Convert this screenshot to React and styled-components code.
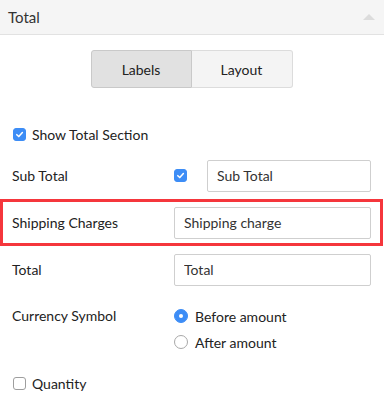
import React, { useState } from "react";
import styled, { createGlobalStyle } from "styled-components";

const GlobalStyle = createGlobalStyle`
  body {
    margin: 0;
    background: #fff;
    font-family: "Lato", "Liberation Sans", sans-serif;
    color: #222;
  }
`;

const App = () => {
  const [tab, setTab] = useState("labels");
  const [showTotal, setShowTotal] = useState(true);
  const [subTotal, setSubTotal] = useState(true);
  const [quantity, setQuantity] = useState(false);
  const [position, setPosition] = useState("before");

  return (
    <Panel>
      <GlobalStyle />
      <Header>
        <Title>Total</Title>
        <Caret />
      </Header>

      <Tabs>
        <Tab active={tab === "labels"} onClick={() => setTab("labels")}>
          Labels
        </Tab>
        <Tab active={tab === "layout"} onClick={() => setTab("layout")}>
          Layout
        </Tab>
      </Tabs>

      <Form>
        <CheckRow onClick={() => setShowTotal(!showTotal)}>
          <CheckBox checked={showTotal} />
          <span>Show Total Section</span>
        </CheckRow>

        <Row>
          <Label>Sub Total</Label>
          <Control>
            <CheckBox checked={subTotal} onClick={() => setSubTotal(!subTotal)} />
            <Input defaultValue="Sub Total" indent />
          </Control>
        </Row>

        <Row highlight>
          <Label>Shipping Charges</Label>
          <Control>
            <Input defaultValue="Shipping charge" />
          </Control>
        </Row>

        <Row>
          <Label>Total</Label>
          <Control>
            <Input defaultValue="Total" />
          </Control>
        </Row>

        <RadioRow>
          <Label>Currency Symbol</Label>
          <RadioList>
            <RadioItem onClick={() => setPosition("before")}>
              <Radio checked={position === "before"} />
              Before amount
            </RadioItem>
            <RadioItem onClick={() => setPosition("after")}>
              <Radio checked={position === "after"} />
              After amount
            </RadioItem>
          </RadioList>
        </RadioRow>

        <CheckRow onClick={() => setQuantity(!quantity)}>
          <CheckBox checked={quantity} />
          <span>Quantity</span>
        </CheckRow>
      </Form>
    </Panel>
  );
};

const CheckBox = ({ checked, onClick }) => (
  <Box checked={checked} onClick={onClick}>
    {checked && (
      <svg width="9" height="9" viewBox="0 0 10 10">
        <path
          d="M2 5.2 L4.2 7.3 L8.2 2.8"
          fill="none"
          stroke="#fff"
          strokeWidth="1.7"
          strokeLinecap="round"
          strokeLinejoin="round"
        />
      </svg>
    )}
  </Box>
);

const Panel = styled.div`
  width: 384px;
  min-height: 417px;
  font-size: 14px;
`;
const Header = styled.div`
  height: 34px;
  padding: 0 8px;
  background: #f5f5f5;
  border-bottom: 1px solid #e2e2e2;
  display: flex;
  align-items: center;
  justify-content: space-between;
`;
const Title = styled.div`
  font-size: 15px;
  color: #333;
`;
const Caret = styled.span`
  width: 0;
  height: 0;
  margin-right: 1px;
  border-left: 6.5px solid transparent;
  border-right: 6.5px solid transparent;
  border-bottom: 6px solid #dcdcdc;
`;
const Tabs = styled.div`
  display: flex;
  justify-content: center;
  margin: 15px 0 0 -1px;
`;
const Tab = styled.button`
  width: 101px;
  height: 38px;
  margin: 0;
  font: inherit;
  font-size: 14px;
  color: #222;
  cursor: pointer;
  background: ${(p) => (p.active ? "#e1e1e1" : "#f4f4f4")};
  border: 1px solid ${(p) => (p.active ? "#c9c9c9" : "#dcdcdc")};
  &:first-child {
    border-radius: 3px 0 0 3px;
  }
  &:last-child {
    border-left: none;
    border-radius: 0 3px 3px 0;
  }
`;
const Form = styled.div`
  width: 383px;
  margin-top: 28px;
`;
const Row = styled.div`
  height: 41px;
  padding: 0 9px;
  border: 3px solid ${(p) => (p.highlight ? "#f5363c" : "transparent")};
  display: grid;
  grid-template-columns: 162px minmax(0, 1fr);
  align-items: center;
`;
const Label = styled.div`
  line-height: 20px;
  color: #222;
`;
const Control = styled.div`
  min-width: 0;
  display: flex;
  align-items: center;
`;
const Input = styled.input`
  flex: 1;
  width: 100%;
  min-width: 0;
  box-sizing: border-box;
  height: 32px;
  margin-left: ${(p) => (p.indent ? "20px" : "0")};
  padding: 0 9px;
  font: inherit;
  font-size: 14px;
  color: #333;
  border: 1px solid #cfcfcf;
  border-radius: 2px;
  outline: none;
`;
const Box = styled.span`
  box-sizing: border-box;
  width: 13px;
  height: 13px;
  flex: none;
  border-radius: 3px;
  display: inline-flex;
  align-items: center;
  justify-content: center;
  cursor: pointer;
  background: ${(p) => (p.checked ? "#3d8df6" : "#fff")};
  border: 1px solid ${(p) => (p.checked ? "#3d8df6" : "#9e9e9e")};
`;
const CheckRow = styled.label`
  height: 30px;
  padding: 0 9px 0 10px;
  border: 3px solid transparent;
  display: flex;
  align-items: center;
  gap: 6px;
  cursor: pointer;
`;
const RadioRow = styled(Row)`
  height: auto;
  padding-top: 10px;
  padding-bottom: 10px;
  align-items: start;
`;
const RadioList = styled.div`
  display: flex;
  flex-direction: column;
  gap: 6px;
`;
const RadioItem = styled.label`
  height: 20px;
  display: flex;
  align-items: center;
  gap: 7px;
  cursor: pointer;
`;
const Radio = styled.span`
  box-sizing: border-box;
  width: 14px;
  height: 14px;
  border-radius: 50%;
  display: inline-flex;
  align-items: center;
  justify-content: center;
  background: ${(p) => (p.checked ? "#3d8df6" : "#fff")};
  border: 1px solid ${(p) => (p.checked ? "#3d8df6" : "#a8a8a8")};
  &::after {
    content: "";
    width: 4px;
    height: 4px;
    border-radius: 50%;
    background: #fff;
    display: ${(p) => (p.checked ? "block" : "none")};
  }
`;

export default App;
